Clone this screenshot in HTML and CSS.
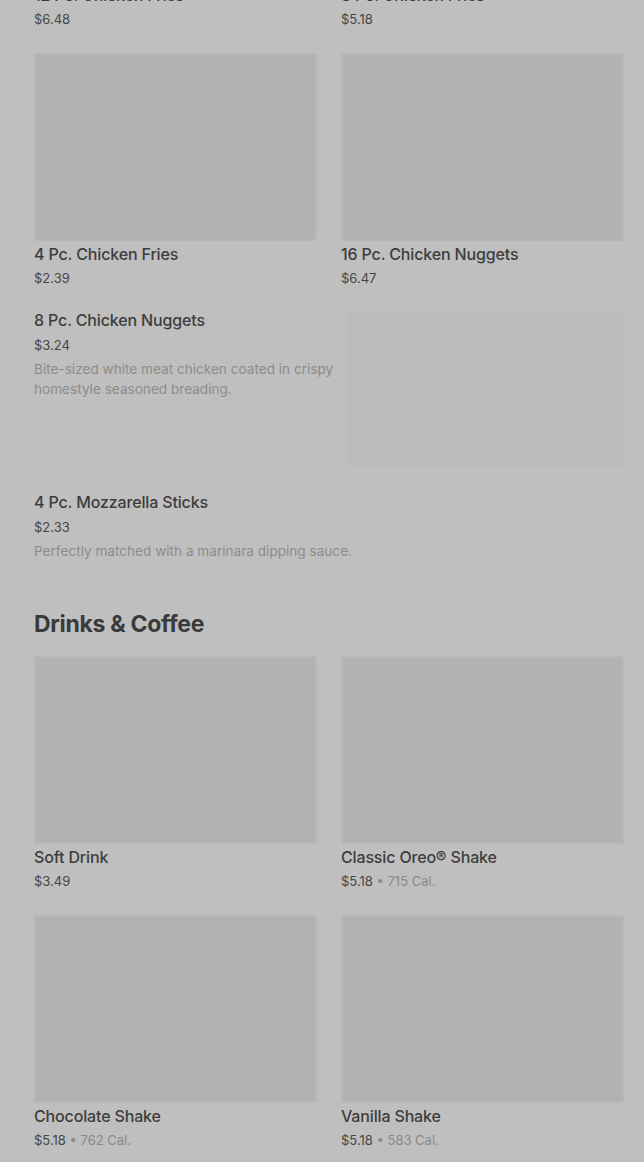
FILE: index.html
```html
<!DOCTYPE html>
<html lang="en">
<head>
    <meta charset="UTF-8">
    <meta name="viewport" content="width=device-width, initial-scale=1.0">
    <title>Menu</title>
    <link rel="stylesheet" href="styles.css">
</head>
<body>

    <div class="menu">

        <!-- Chicken section (scrolled) -->
        <div class="section">
            <div class="grid">
                <div class="card">
                    <div class="thumb"></div>
                    <div class="card-title">12 Pc. Chicken Fries</div>
                    <div class="price">$6.48</div>
                </div>
                <div class="card">
                    <div class="thumb"></div>
                    <div class="card-title">8 Pc. Chicken Fries</div>
                    <div class="price">$5.18</div>
                </div>
                <div class="card">
                    <div class="thumb"></div>
                    <div class="card-title">4 Pc. Chicken Fries</div>
                    <div class="price">$2.39</div>
                </div>
                <div class="card">
                    <div class="thumb"></div>
                    <div class="card-title">16 Pc. Chicken Nuggets</div>
                    <div class="price">$6.47</div>
                </div>
            </div>

            <div class="list">
                <div class="row">
                    <div class="row-text">
                        <div class="row-title">8 Pc. Chicken Nuggets</div>
                        <div class="price">$3.24</div>
                        <div class="desc">Bite-sized white meat chicken coated in crispy homestyle seasoned breading.</div>
                    </div>
                    <div class="row-thumb"></div>
                </div>
                <div class="row">
                    <div class="row-text">
                        <div class="row-title">4 Pc. Mozzarella Sticks</div>
                        <div class="price">$2.33</div>
                        <div class="desc">Perfectly matched with a marinara dipping sauce.</div>
                    </div>
                </div>
            </div>
        </div>

        <!-- Drinks section -->
        <div class="section">
            <h2>Drinks &amp; Coffee</h2>
            <div class="grid">
                <div class="card">
                    <div class="thumb"></div>
                    <div class="card-title">Soft Drink</div>
                    <div class="price">$3.49</div>
                </div>
                <div class="card">
                    <div class="thumb"></div>
                    <div class="card-title">Classic Oreo® Shake</div>
                    <div class="price">$5.18 <span class="cal">• 715 Cal.</span></div>
                </div>
                <div class="card">
                    <div class="thumb"></div>
                    <div class="card-title">Chocolate Shake</div>
                    <div class="price">$5.18 <span class="cal">• 762 Cal.</span></div>
                </div>
                <div class="card">
                    <div class="thumb"></div>
                    <div class="card-title">Vanilla Shake</div>
                    <div class="price">$5.18 <span class="cal">• 583 Cal.</span></div>
                </div>
            </div>
        </div>

    </div>

</body>
</html>
```

FILE: styles.css
```css
body {
    font-family: Inter, "Noto Sans", sans-serif;
    background-color: #bfbfbf;
    color: #3d3d3d;
    margin: 0;
    padding: 0;
    overflow: hidden;
}

/* page is scrolled part way down the menu */
.menu {
    margin-top: -206px;
    padding: 0 20px 0 34px;
}

.section + .section {
    margin-top: 47px;
}

h2 {
    margin: 0 0 16px;
    font-size: 23px;
    line-height: 32px;
    font-weight: 700;
    letter-spacing: -0.3px;
    color: #3a3a3a;
}

/* Grid cards */
.grid {
    display: grid;
    grid-template-columns: 1fr 1fr;
    column-gap: 24px;
    row-gap: 24px;
}

.thumb {
    height: 188px;
    background-color: #b2b2b2;
    border: 2px solid #b7b7b7;
    box-sizing: border-box;
}

.card-title {
    margin-top: 3px;
    font-size: 16px;
    line-height: 20px;
    font-weight: 500;
    letter-spacing: -0.15px;
}

.price {
    margin-top: 4px;
    font-size: 13px;
    line-height: 20px;
    color: #464646;
}

.cal {
    color: #8a8a8a;
}

/* List rows */
.list {
    margin-top: 23px;
    display: flex;
    flex-direction: column;
    gap: 26px;
}

.row {
    display: flex;
    gap: 8px;
}

.row-text {
    flex: 1;
}

.row-title {
    font-size: 16px;
    line-height: 18px;
    font-weight: 500;
    letter-spacing: -0.15px;
}

.row .price {
    margin-top: 6px;
}

.desc {
    margin-top: 4px;
    font-size: 13.6px;
    line-height: 20px;
    color: #8c8c8c;
}

.row-thumb {
    width: 276px;
    height: 156px;
    flex-shrink: 0;
    background-color: #bbbbbb;
}
```
